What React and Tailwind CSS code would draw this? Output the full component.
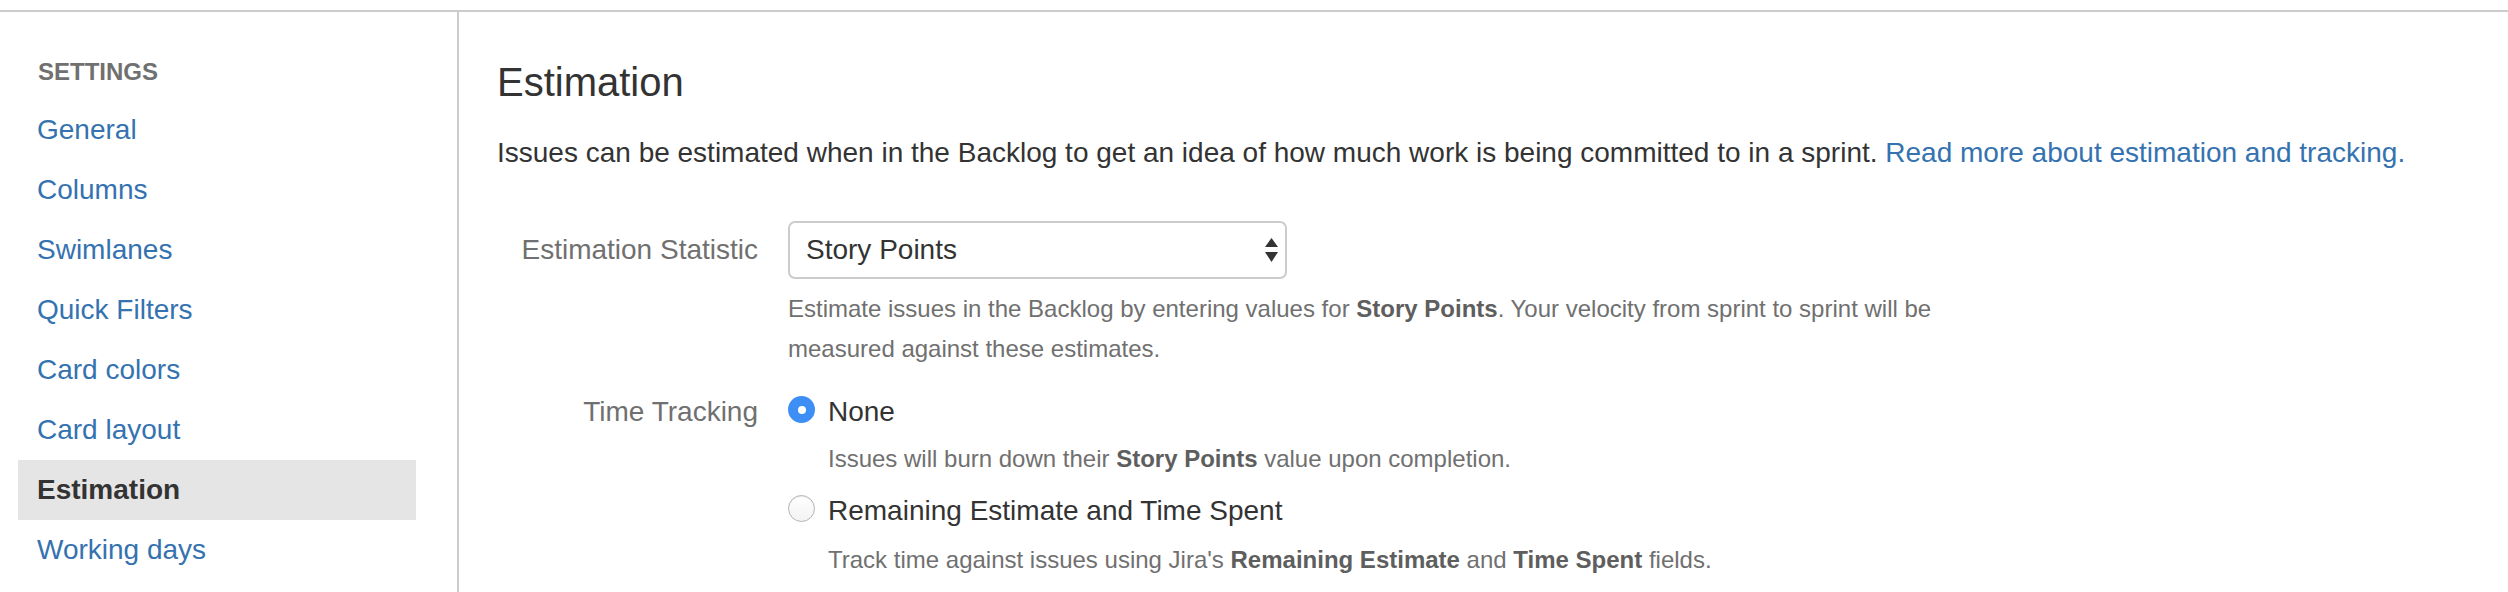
import React from "react";

const navItems = [
  "General",
  "Columns",
  "Swimlanes",
  "Quick Filters",
  "Card colors",
  "Card layout",
  "Estimation",
  "Working days",
];

function SelectArrows() {
  return (
    <svg width="13" height="24" viewBox="0 0 13 24" className="shrink-0">
      <path d="M6.5 0 L13 9 L0 9 Z" fill="#333" />
      <path d="M0 14 L13 14 L6.5 24 Z" fill="#333" />
    </svg>
  );
}

function Radio({ checked }) {
  if (checked) {
    return (
      <span className="mt-[4px] flex h-[27px] w-[27px] shrink-0 items-center justify-center rounded-full bg-[#3d8ff5]">
        <span className="h-[8px] w-[8px] rounded-full bg-white" />
      </span>
    );
  }
  return (
    <span className="mt-[4px] block h-[27px] w-[27px] shrink-0 rounded-full border border-[#b4b4b4] bg-gradient-to-b from-white to-[#f2f2f2] shadow-[inset_0_1px_1px_rgba(0,0,0,0.08)]" />
  );
}

export default function App() {
  return (
    <div
      className="min-h-[592px] w-full bg-white pt-[10px]"
      style={{ fontFamily: '"Liberation Sans", Arial, Helvetica, sans-serif' }}
    >
      <div className="flex min-h-[582px] border-t-2 border-[#cccccc]">
        {/* Sidebar */}
        <aside className="w-[459px] shrink-0 border-r-2 border-[#cccccc] pt-[42px]">
          <div className="mb-[10px] pl-[38px] text-[24px] font-bold leading-[36px] text-[#707070]">
            SETTINGS
          </div>
          <ul className="pl-[18px]">
            {navItems.map((item) =>
              item === "Estimation" ? (
                <li
                  key={item}
                  className="h-[60px] w-[398px] bg-[#e5e5e5] pl-[19px] text-[28px] font-bold leading-[60px] text-[#333333]"
                >
                  {item}
                </li>
              ) : (
                <li
                  key={item}
                  className="h-[60px] w-[398px] pl-[19px] text-[28px] leading-[60px] text-[#3572b0]"
                >
                  {item}
                </li>
              )
            )}
          </ul>
        </aside>

        {/* Main */}
        <main className="flex-1 pl-[38px]">
          <h1 className="mt-[45px] text-[40px] font-normal leading-[50px] text-[#333333]">
            Estimation
          </h1>
          <p className="mt-[26px] whitespace-nowrap text-[28px] leading-[40px] text-[#333333]">
            Issues can be estimated when in the Backlog to get an idea of how much work is being
            committed to in a sprint.{" "}
            <span className="text-[#3572b0]">Read more about estimation and tracking.</span>
          </p>

          {/* Estimation Statistic */}
          <div className="mt-[48px] flex items-center gap-[30px]">
            <div className="w-[261px] shrink-0 text-right text-[28px] leading-[40px] text-[#707070]">
              Estimation Statistic
            </div>
            <div className="flex h-[58px] w-[499px] items-center justify-between rounded-[7px] border-2 border-[#cccccc] bg-white pl-[16px] pr-[7px] text-[28px] text-[#333333]">
              <span>Story Points</span>
              <SelectArrows />
            </div>
          </div>
          <div className="mt-[10px] flex gap-[30px]">
            <div className="w-[261px] shrink-0" />
            <p className="max-w-[1180px] text-[24px] leading-[40px] text-[#707070]">
              Estimate issues in the Backlog by entering values for{" "}
              <b className="font-bold text-[#5e5e5e]">Story Points</b>. Your velocity from sprint to
              sprint will be measured against these estimates.
            </p>
          </div>

          {/* Time Tracking */}
          <div className="mt-[23px] flex gap-[30px]">
            <div className="w-[261px] shrink-0 text-right text-[28px] leading-[40px] text-[#707070]">
              Time Tracking
            </div>
            <div className="flex flex-col">
              <div className="flex items-start gap-[13px]">
                <Radio checked />
                <span className="text-[28px] leading-[40px] text-[#333333]">None</span>
              </div>
              <p className="mt-[7px] pl-[40px] text-[24px] leading-[40px] text-[#707070]">
                Issues will burn down their{" "}
                <b className="font-bold text-[#5e5e5e]">Story Points</b> value upon completion.
              </p>
              <div className="mt-[12px] flex items-start gap-[13px]">
                <Radio />
                <span className="text-[28px] leading-[40px] text-[#333333]">
                  Remaining Estimate and Time Spent
                </span>
              </div>
              <p className="mt-[9px] pl-[40px] text-[24px] leading-[40px] text-[#707070]">
                Track time against issues using Jira's{" "}
                <b className="font-bold text-[#5e5e5e]">Remaining Estimate</b> and{" "}
                <b className="font-bold text-[#5e5e5e]">Time Spent</b> fields.
              </p>
            </div>
          </div>
        </main>
      </div>
    </div>
  );
}
